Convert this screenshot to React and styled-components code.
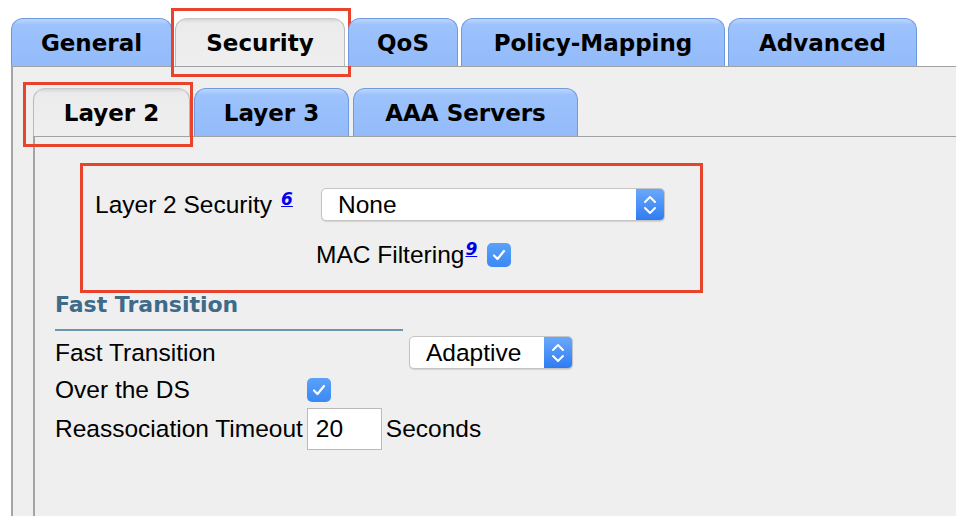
import React from 'react'
import styled, { createGlobalStyle, css } from 'styled-components'

const GlobalStyle = createGlobalStyle`
  html, body {
    margin: 0;
    background: #ffffff;
    overflow: hidden;
  }
  body {
    font-family: "Liberation Sans", Arial, sans-serif;
    color: #000;
  }
`

const Page = styled.div`
  height: 516px;
  box-sizing: border-box;
  padding: 18px 0 0 11px;
  display: flex;
  flex-direction: column;
`

const TabBar = styled.div`
  display: flex;
  align-items: flex-end;
  gap: ${p => p.$gap || 3}px;
`

const markBox = css`
  &::after {
    content: "";
    position: absolute;
    top: ${p => -p.$mark[0]}px;
    right: ${p => -p.$mark[1]}px;
    bottom: ${p => -p.$mark[2]}px;
    left: ${p => -p.$mark[3]}px;
    border: 3px solid #e8432c;
    pointer-events: none;
  }
`

const Tab = styled.div`
  position: relative;
  box-sizing: border-box;
  width: ${p => p.$width}px;
  height: 48px;
  display: flex;
  align-items: center;
  justify-content: center;
  border: 1px solid #6f9ae0;
  border-bottom: none;
  border-radius: 12px 12px 0 0;
  background: linear-gradient(#bcd6fe 0px, #9dc2fc 6px, #93bbfa 100%);
  font-family: "DejaVu Sans", Verdana, sans-serif;
  font-weight: bold;
  font-size: 23px;
  color: #000;
  ${p => p.$active && css`
    border-color: #b9b9b9;
    border-top-color: #c8c8c8;
    background: linear-gradient(#d6d6d6 0px, #ebebeb 4px, #efefef 100%);
  `}
  ${p => p.$mark && markBox}
`

const Panel = styled.div`
  flex: 1;
  background: #efefef;
  border-top: 1px solid #a2a2a2;
  border-left: 2px solid #a4a4a4;
  padding: 21px 0 0 20px;
  display: flex;
  flex-direction: column;
`

const InnerPanel = styled.div`
  flex: 1;
  border-top: 1px solid #a2a2a2;
  border-left: 2px solid #a4a4a4;
  padding: 26px 0 0 0;
`

const SecurityBox = styled.div`
  box-sizing: border-box;
  width: 623px;
  height: 130px;
  margin-left: 45px;
  border: 3px solid #e8432c;
  padding: 22px 0 0 12px;
`

const Row = styled.div`
  display: flex;
  align-items: center;
  height: ${p => p.$h || 33}px;
  margin-top: ${p => p.$mt || 0}px;
  padding-left: ${p => p.$pl || 0}px;
  font-size: 24.5px;
`

const Label = styled.span`
  display: inline-flex;
  align-items: flex-start;
  width: ${p => (p.$w ? `${p.$w}px` : 'auto')};
  flex-shrink: 0;
  white-space: nowrap;
`

const Sup = styled.a`
  font-family: "DejaVu Sans", Verdana, sans-serif;
  font-size: 17px;
  line-height: 18px;
  font-weight: bold;
  font-style: italic;
  color: #0000ee;
  text-decoration: underline;
  margin: -1px 0 0 ${p => p.$ml || 0}px;
`

const SelectBox = styled.div`
  box-sizing: border-box;
  width: ${p => p.$width}px;
  height: 33px;
  display: flex;
  background: #fff;
  border: 1px solid #c4c4c4;
  border-radius: 5px;
  box-shadow: 0 1px 1px rgba(0, 0, 0, 0.12);
  overflow: hidden;
`

const SelectText = styled.span`
  flex: 1;
  padding-left: 16px;
  display: flex;
  align-items: center;
  font-size: 24.5px;
`

const SelectArrow = styled.span`
  width: 28px;
  display: flex;
  align-items: center;
  justify-content: center;
  background: linear-gradient(#6aa8fb, #2f7cf3);
`

const CheckBox = styled.span`
  width: 24px;
  height: 24px;
  margin-left: ${p => p.$ml || 0}px;
  border-radius: 5px;
  background: linear-gradient(#5aa2f9, #3a89f4);
  display: flex;
  align-items: center;
  justify-content: center;
`

const Section = styled.div`
  padding-left: 20px;
`

const SectionTitle = styled.div`
  width: 348px;
  padding-bottom: 12px;
  border-bottom: 2px solid #6c95af;
  font-family: "DejaVu Sans", Verdana, sans-serif;
  font-weight: bold;
  font-size: 22px;
  line-height: 24px;
  color: #3d6b89;
`

const NumberInput = styled.span`
  box-sizing: border-box;
  width: 75px;
  height: 42px;
  margin: 0 4px;
  padding-left: 8px;
  display: flex;
  align-items: center;
  background: #fff;
  border: 1px solid #bababa;
  font-size: 24.5px;
`

const Chevrons = () => (
  <svg width="14" height="22" viewBox="0 0 14 22">
    <path d="M2 8 L7 3 L12 8" fill="none" stroke="#fff" strokeWidth="2" strokeLinecap="round" strokeLinejoin="round" />
    <path d="M2 14 L7 19 L12 14" fill="none" stroke="#fff" strokeWidth="2" strokeLinecap="round" strokeLinejoin="round" />
  </svg>
)

const Select = ({ value, width }) => (
  <SelectBox $width={width}>
    <SelectText>{value}</SelectText>
    <SelectArrow><Chevrons /></SelectArrow>
  </SelectBox>
)

const Check = ({ ml }) => (
  <CheckBox $ml={ml}>
    <svg width="16" height="16" viewBox="0 0 16 16">
      <path d="M3 8.5 L6.5 12 L13 4" fill="none" stroke="#fff" strokeWidth="2.2" strokeLinecap="round" strokeLinejoin="round" />
    </svg>
  </CheckBox>
)

const App = () => {
  return (
    <>
      <GlobalStyle />
      <Page>
        <TabBar>
          <Tab $width={161}>General</Tab>
          <Tab $width={170} $active $mark={[11, 7, 11, 5]}>Security</Tab>
          <Tab $width={110}>QoS</Tab>
          <Tab $width={264}>Policy-Mapping</Tab>
          <Tab $width={189}>Advanced</Tab>
        </TabBar>
        <Panel>
          <TabBar $gap={4}>
            <Tab $width={157} $active $mark={[7, 4, 11, 11]}>Layer 2</Tab>
            <Tab $width={155}>Layer 3</Tab>
            <Tab $width={225}>AAA Servers</Tab>
          </TabBar>
          <InnerPanel>
            <SecurityBox>
              <Row>
                <Label $w={226}>
                  Layer 2 Security<Sup href="#" $ml={9}>6</Sup>
                </Label>
                <Select value="None" width={344} />
              </Row>
              <Row $h={24} $mt={22} $pl={221}>
                <Label>
                  MAC Filtering<Sup href="#" $ml={1}>9</Sup>
                </Label>
                <Check ml={10} />
              </Row>
            </SecurityBox>
            <Section>
              <SectionTitle>Fast Transition</SectionTitle>
              <Row $mt={5}>
                <Label $w={354}>Fast Transition</Label>
                <Select value="Adaptive" width={164} />
              </Row>
              <Row $h={24} $mt={9}>
                <Label $w={252}>Over the DS</Label>
                <Check />
              </Row>
              <Row $h={42} $mt={6}>
                <Label>Reassociation Timeout</Label>
                <NumberInput>20</NumberInput>
                <Label>Seconds</Label>
              </Row>
            </Section>
          </InnerPanel>
        </Panel>
      </Page>
    </>
  )
}

export default App
